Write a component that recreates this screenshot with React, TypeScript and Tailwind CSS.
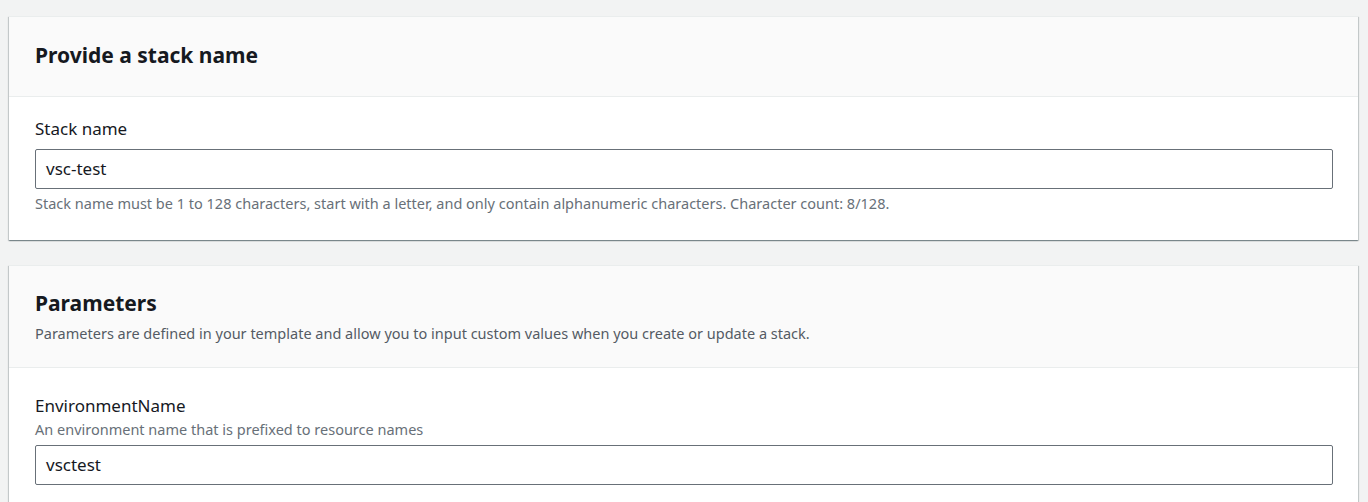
import React from "react";

const font = { fontFamily: '"Noto Sans", "Open Sans", Arial, sans-serif' };

function Card({ children }: { children: React.ReactNode }) {
  return (
    <div className="bg-white shadow-[0_1px_1px_0_rgba(0,28,36,0.3),1px_1px_1px_0_rgba(0,28,36,0.15),-1px_1px_1px_0_rgba(0,28,36,0.15)] border-t border-[#eaeded]">
      {children}
    </div>
  );
}

export default function App() {
  return (
    <div className="min-h-[502px] bg-[#f2f3f3] px-[9px] pt-[16px] pb-4 text-[#16191f]" style={font}>
      <div className="flex flex-col gap-[25px] w-[1349px]">
        <Card>
          <div className="bg-[#fafafa] border-b border-[#eaeded] h-[80px] flex items-center px-[26px]">
            <h2 className="text-[21px] font-bold leading-[24px] pb-[4px]">Provide a stack name</h2>
          </div>
          <div className="px-[26px] pt-[21px] pb-[27px]">
            <div className="text-[17px] leading-[22px] mb-[9px]">Stack name</div>
            <div className="h-[40px] w-[1298px] border border-[#687078] rounded-[2px] flex items-center px-[10px] text-[17px]">vsc-test</div>
            <div className="text-[14.5px] leading-[20px] text-[#687078] mt-[4px]">
              Stack name must be 1 to 128 characters, start with a letter, and only contain alphanumeric characters. Character count: 8/128.
            </div>
          </div>
        </Card>
        <Card>
          <div className="bg-[#fafafa] border-b border-[#eaeded] h-[102px] px-[26px] pt-[23px]">
            <h2 className="text-[21px] font-bold leading-[28px]">Parameters</h2>
            <div className="text-[14.5px] leading-[20px] text-[#545b64] mt-[6px]">
              Parameters are defined in your template and allow you to input custom values when you create or update a stack.
            </div>
          </div>
          <div className="px-[26px] pt-[26px] pb-[26px]">
            <div className="text-[17px] leading-[24px]">EnvironmentName</div>
            <div className="text-[14.5px] leading-[22px] text-[#687078] mb-[5px]">An environment name that is prefixed to resource names</div>
            <div className="h-[40px] w-[1298px] border border-[#687078] rounded-[2px] flex items-center px-[10px] text-[17px]">vsctest</div>
          </div>
        </Card>
      </div>
    </div>
  );
}
